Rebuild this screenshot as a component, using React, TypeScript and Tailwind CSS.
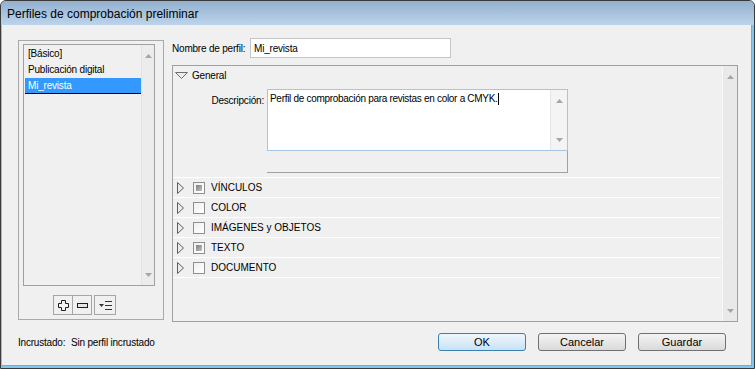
import React from 'react';

const profiles = ['[Básico]', 'Publicación digital', 'Mi_revista'];

const sections = [
  { id: 'links', label: 'VÍNCULOS', mixed: true },
  { id: 'color', label: 'COLOR', mixed: false },
  { id: 'images', label: 'IMÁGENES y OBJETOS', mixed: false },
  { id: 'text', label: 'TEXTO', mixed: true },
  { id: 'doc', label: 'DOCUMENTO', mixed: false },
];

const ArrowUp = () => (
  <svg width="7" height="4" viewBox="0 0 7 4">
    <path d="M0 4 L3.5 0 L7 4 Z" fill="#a6a6a6" />
  </svg>
);

const ArrowDown = () => (
  <svg width="7" height="4" viewBox="0 0 7 4">
    <path d="M0 0 L7 0 L3.5 4 Z" fill="#a6a6a6" />
  </svg>
);

const ScrollTrack: React.FC<{ className: string }> = ({ className }) => (
  <div className={`flex flex-col items-center justify-between ${className}`}>
    <ArrowUp />
    <ArrowDown />
  </div>
);

const Disclosure: React.FC<{ open?: boolean }> = ({ open }) =>
  open ? (
    <svg width="13" height="7" viewBox="0 0 13 7">
      <path d="M0.5 0.5 L12.5 0.5 L6.5 6.5 Z" fill="#ececec" stroke="#6e6e6e" />
    </svg>
  ) : (
    <svg width="7" height="12" viewBox="0 0 7 12">
      <path d="M0.5 0.5 L6.5 6 L0.5 11.5 Z" fill="#ececec" stroke="#5e5e5e" />
    </svg>
  );

const PlusIcon = () => (
  <svg width="11" height="11" viewBox="0 0 11 11">
    <path
      d="M3.5 0.5 H7.5 V3.5 H10.5 V7.5 H7.5 V10.5 H3.5 V7.5 H0.5 V3.5 H3.5 Z"
      fill="#f4f4f4"
      stroke="#1e1e1e"
    />
  </svg>
);

const MinusIcon = () => (
  <svg width="11" height="5" viewBox="0 0 11 5">
    <rect x="0.5" y="0.5" width="10" height="4" fill="#e6e6e6" stroke="#1e1e1e" />
  </svg>
);

const MenuIcon = () => (
  <svg width="13" height="9" viewBox="0 0 13 9">
    <path d="M0 3 H5 L2.5 6 Z" fill="#333" />
    <path d="M6 0.5 H13 M6 4.5 H13 M6 8.5 H13" stroke="#333" />
  </svg>
);

const DialogButton: React.FC<{ label: string; primary?: boolean }> = ({ label, primary }) => (
  <button
    className={
      primary
        ? 'w-[88px] h-[18px] rounded-[3px] border border-[#3c7fb1] bg-gradient-to-b from-[#eef6fc] to-[#c9e2f6] text-[11px] leading-none text-black'
        : 'w-[88px] h-[18px] rounded-[3px] border border-[#707070] bg-gradient-to-b from-[#f4f4f4] to-[#dadada] text-[11px] leading-none text-black'
    }
  >
    {label}
  </button>
);

export default function App() {
  return (
    <div className="w-[755px] h-[369px] flex flex-col bg-[#7cc8ee] border border-[#3a3a3a] rounded-t-[6px] overflow-hidden font-['Liberation_Sans',Arial,sans-serif] text-black">
      <div className="h-[24px] shrink-0 bg-gradient-to-b from-[#93b0ce] to-[#bcd4eb] pl-[6px] pt-[2px] flex items-center text-[12px]">
        Perfiles de comprobación preliminar
      </div>

      <div className="flex-1 flex flex-col ml-[1px] mr-[2px] mb-[2px] bg-[#f0f0f0] border-r border-b border-[#a0a0a0] pl-[16px] pt-[13px] tracking-[-0.2px]">
        <div className="flex items-start">
          {/* lista de perfiles */}
          <div className="w-[146px] h-[280px] mt-[2px] border border-[#a9a9a9] flex flex-col pl-[4px] pt-[3px]">
            <div className="w-[132px] h-[242px] border border-[#a0a0a0] bg-[#f0f0f0] flex">
              <div className="flex-1 pt-[1px] pl-[1px] text-[10px]">
                {profiles.map((name, index) =>
                  index === profiles.length - 1 ? (
                    <div key={name} className="h-[16px] leading-[15px] px-[3px] bg-[#3399ff] text-white border-b border-black">
                      {name}
                    </div>
                  ) : (
                    <div key={name} className="h-[16px] leading-[16px] px-[3px]">
                      {name}
                    </div>
                  ),
                )}
              </div>
              <ScrollTrack className="w-[13px] bg-[#ececec] border-l border-[#e2e2e2] pt-[9px] pb-[8px]" />
            </div>

            <div className="flex mt-[9px] pl-[30px]">
              <div className="w-[20px] h-[20px] border border-[#a5a5a5] flex items-center justify-center">
                <PlusIcon />
              </div>
              <div className="w-[20px] h-[20px] -ml-px border border-[#a5a5a5] flex items-center justify-center">
                <MinusIcon />
              </div>
              <div className="w-[22px] h-[20px] ml-[2px] border border-[#a5a5a5] flex items-center justify-center">
                <MenuIcon />
              </div>
            </div>
          </div>

          {/* ajustes del perfil */}
          <div className="w-[566px] ml-[8px] flex flex-col">
            <div className="flex items-center h-[20px] text-[10px]">
              <span className="w-[78px]">Nombre de perfil:</span>
              <div className="w-[201px] h-[20px] border border-[#c5c5c5] bg-white pl-[3px] flex items-center">
                Mi_revista
              </div>
            </div>

            <div className="mt-[7px] h-[257px] border border-[#a0a0a0] flex text-[10px]">
              <div className="flex-1 flex flex-col">
                <div className="h-[19px] flex items-center pl-[2px]">
                  <Disclosure open />
                  <span className="ml-[4px]">General</span>
                </div>

                <div className="flex mt-[4px]">
                  <span className="w-[91px] text-right pt-[4px]">Descripción:</span>
                  <div className="ml-[3px] w-[301px] h-[62px] border border-[#a4c6e3] bg-white flex">
                    <div className="flex-1 pl-[2px] pt-[2px] leading-[14px] tracking-[-0.3px]">
                      Perfil de comprobación para revistas en color a CMYK.
                      <span className="inline-block w-px h-[12px] bg-black align-middle" />
                    </div>
                    <ScrollTrack className="w-[17px] bg-[#f4f4f4] border-l border-[#e4e4e4] pt-[9px] pb-[8px]" />
                  </div>
                </div>
                <div className="ml-[94px] w-[301px] h-[22px] border-r border-b border-[#a0a0a0]" />

                <div className="mt-[4px] w-[548px] border-b border-white">
                  {sections.map((section) => (
                    <div key={section.id} className="h-[20px] border-t border-white flex items-center pl-[4px]">
                      <Disclosure />
                      <div className="ml-[9px] w-[12px] h-[12px] border border-[#8e8f8f] bg-gradient-to-br from-[#f0f0f0] to-white flex items-center justify-center">
                        {section.mixed && (
                          <div className="w-[6px] h-[6px] bg-gradient-to-br from-[#7e7e7e] to-[#c2c2c2]" />
                        )}
                      </div>
                      <span className="ml-[6px] tracking-normal">{section.label}</span>
                    </div>
                  ))}
                </div>
              </div>
              <ScrollTrack className="w-[15px] bg-[#e9e9e9] border-l border-[#f8f8f8] pt-[9px] pb-[8px]" />
            </div>
          </div>
        </div>

        <div className="flex items-center mt-[11px] h-[18px] text-[10px]">
          <span className="w-[53px]">Incrustado:</span>
          <span>Sin perfil incrustado</span>
          <div className="ml-auto mr-[25px] flex gap-[12px] tracking-normal">
            <DialogButton label="OK" primary />
            <DialogButton label="Cancelar" />
            <DialogButton label="Guardar" />
          </div>
        </div>
      </div>
    </div>
  );
}
